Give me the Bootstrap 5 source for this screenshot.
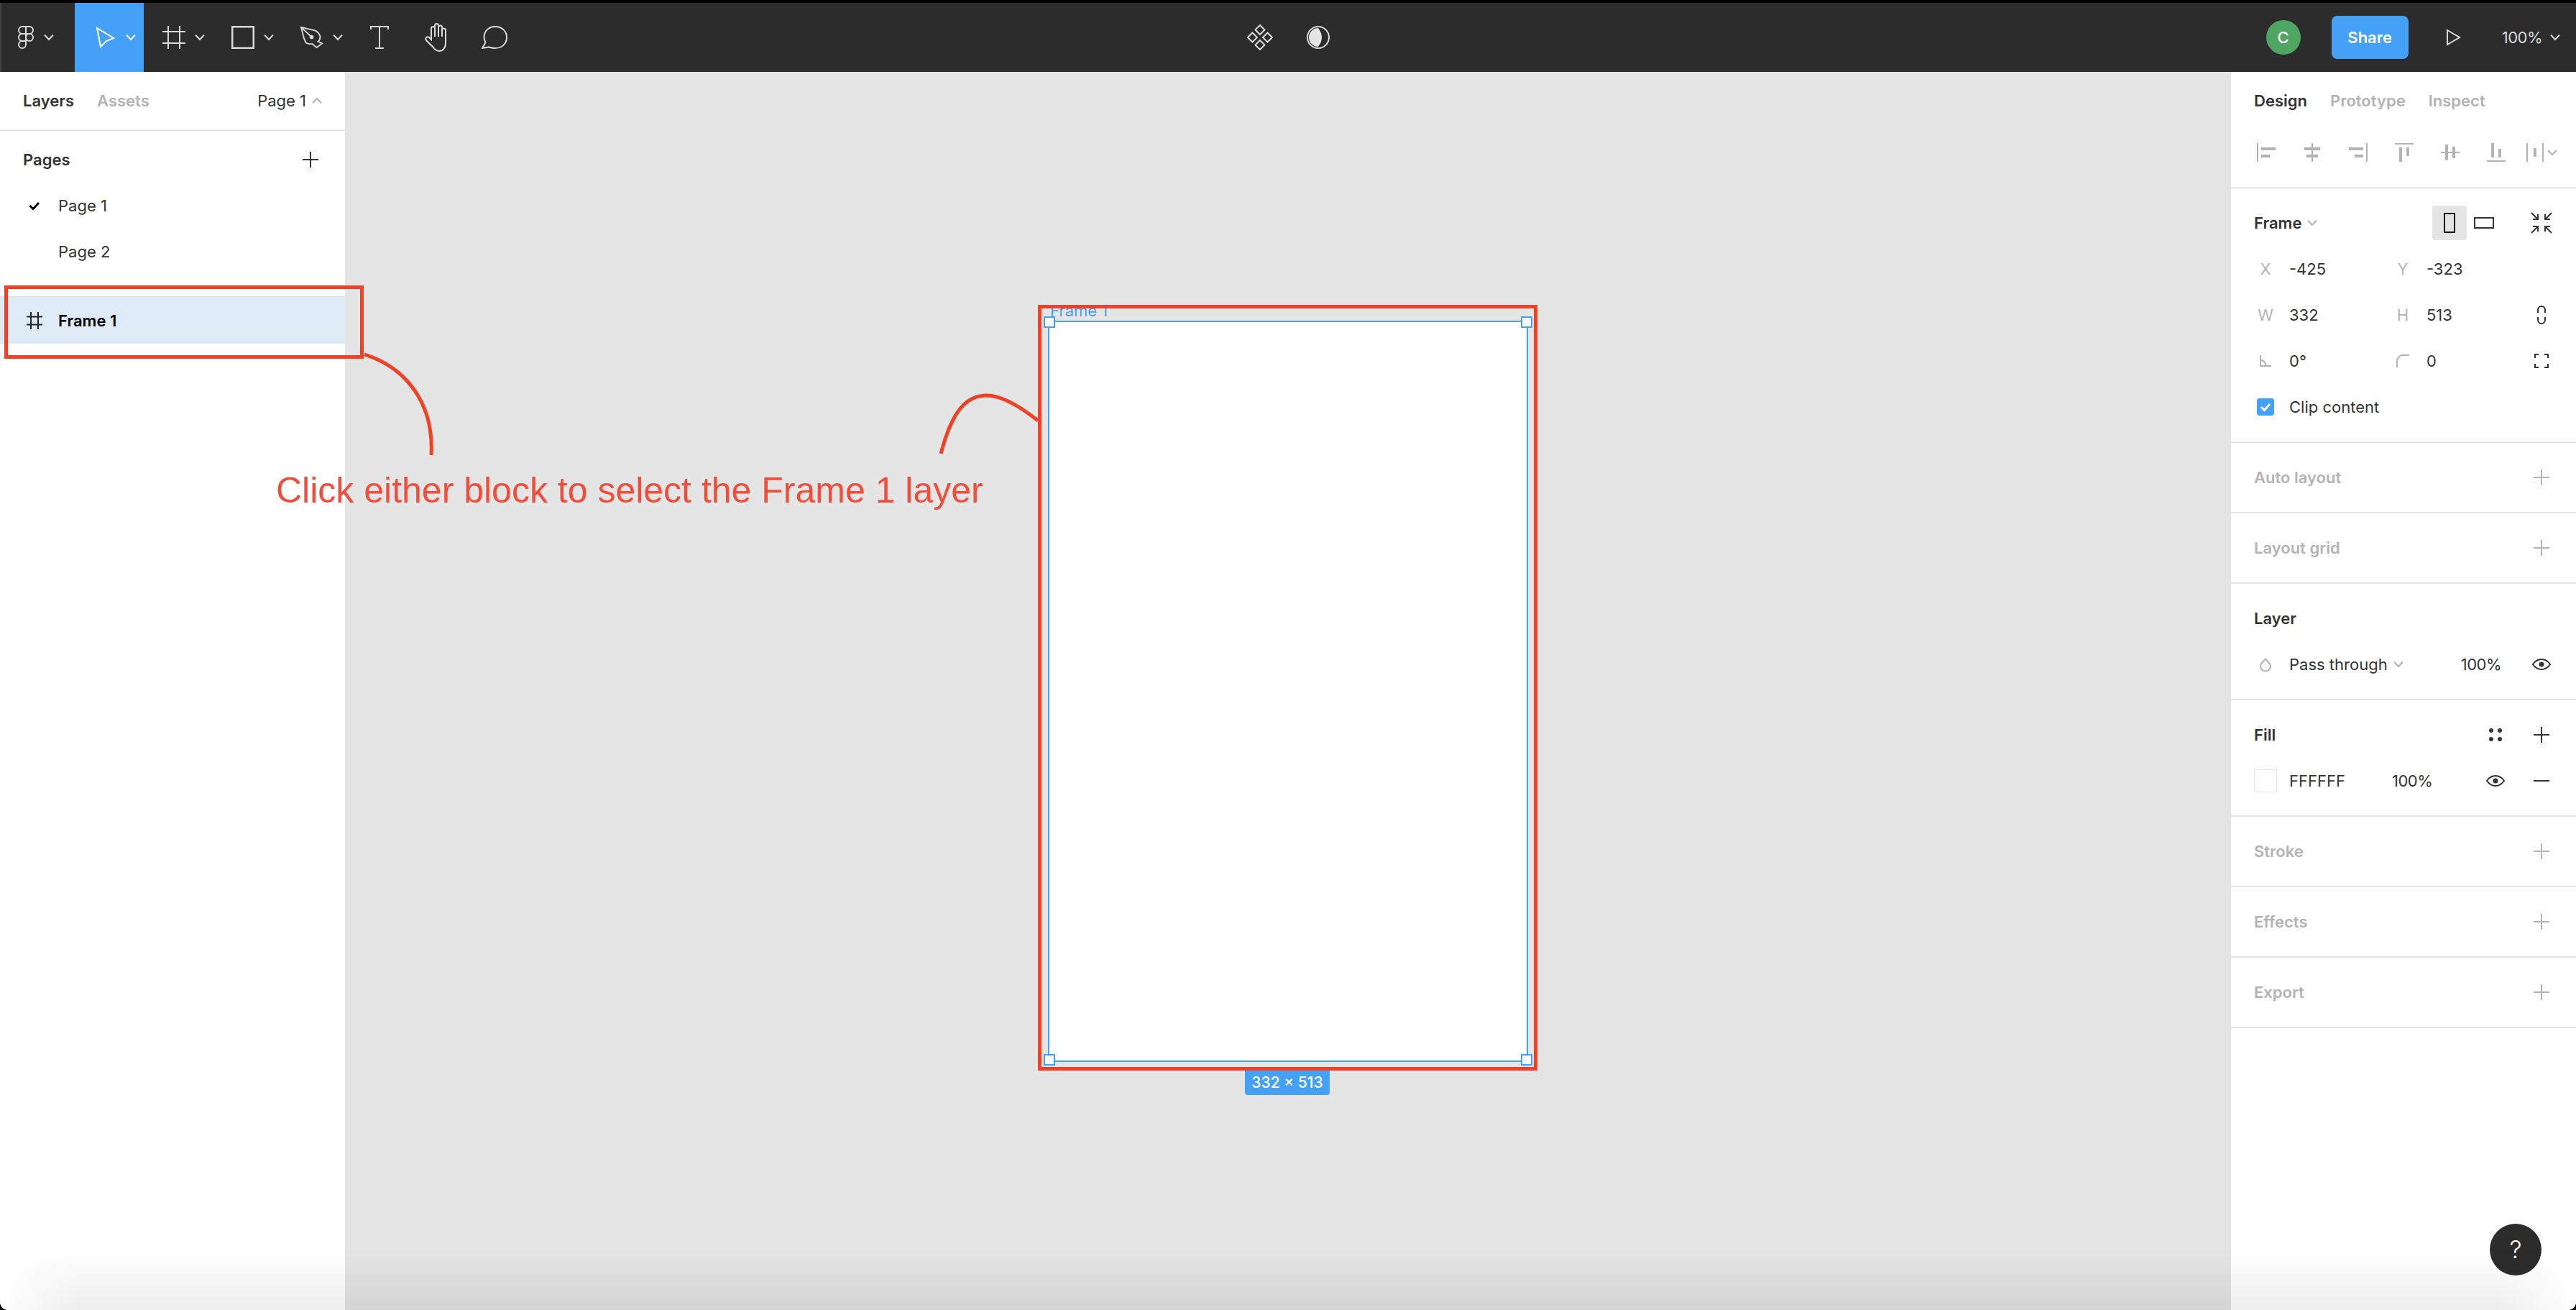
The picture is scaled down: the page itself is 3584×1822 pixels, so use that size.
<!DOCTYPE html>
<html lang="en">
<head>
    <meta charset="UTF-8">
    <title>Figma - Frame 1</title>
    <link href="https://cdn.jsdelivr.net/npm/bootstrap@5.3.2/dist/css/bootstrap.min.css" rel="stylesheet">
    <style>
        html, body { height: 100%; overflow: hidden; }
        body { font-family: "Inter", "Liberation Sans", sans-serif; font-size: 22px; line-height: 32px; color: #333; }
        svg { display: block; flex: none; }
        .fg-app { width: 3584px; height: 1822px; }

        .fg-toolbar { height: 100px; background: #2c2c2c; border-top: 4px solid #000; box-shadow: inset 2px 0 #444; color: #fff; display: grid; grid-template-columns: 1fr auto 1fr; }
        .fg-tool { height: 96px; width: 96px; padding-left: 26px; color: #d9d9d9; }
        .fg-tool.is-active { background: #45a1f5; color: #fff; }
        .fg-tool-logo { width: 104px; padding-left: 25px; }
        .fg-tool-logo .fg-chev { margin-left: 14px; }
        .fg-tool-icon { width: 32px; }
        .fg-tool > .fg-tool-icon + .fg-chev { margin-left: 13px; }
        .fg-tool-plain { height: 96px; width: 80px; color: #d9d9d9; }
        .fg-avatar { width: 48px; height: 48px; background: #4fa662; margin-right: 43px; font-weight: 500; }
        .fg-share { width: 107px; height: 60px; background: #45a1f5; color: #fff; border: 0; border-radius: 8px; font-size: 22px; font-weight: 600; padding: 0; margin-right: 52px; }
        .fg-zoom { color: #d9d9d9; margin-left: 57px; margin-right: 11px; }
        .fg-zoom-chev { color: #d9d9d9; margin-right: 22px; }
        .fg-pct { letter-spacing: -.5px; }

        .fg-main { height: 1722px; }
        .fg-left { width: 480px; background: #fff; }
        .fg-right { width: 484px; background: #fff; border-left: 4px solid #e5e5e5; }
        .fg-canvas { background: #e5e5e5; }

        .fg-tabs { height: 80px; padding: 0 32px; gap: 32px; }
        .fg-tabs-left { height: 82px; border-bottom: 2px solid #e5e5e5; }
        .fg-tab { font-weight: 600; color: #b3b3b3; }
        .fg-tab.is-on { color: #333; }
        .fg-page-pick { margin-right: -24px; }
        .fg-pages { padding: 8px 0 30px; border-bottom: 2px solid #e5e5e5; }
        .fg-row64 { height: 64px; }
        .fg-pages-head { padding: 0 37px 0 32px; }
        .fg-page-row { padding-left: 37px; }
        .fg-page-name { margin-left: 22px; }
        .fg-page-spacer { width: 22px; }
        .fg-layer-row { background: #deeaf5; color: #000; font-weight: 600; }

        .fg-section { padding: 16px 32px; border-bottom: 2px solid #e5e5e5; }
        .fg-title { font-weight: 600; }
        .fg-muted { color: #b3b3b3; }
        .fg-aligns { height: 64px; margin: 0 -32px 0 -15px; color: #b3b3b3; }
        .fg-aligns > div { width: 64px; }
        .fg-label { width: 32px; text-align: center; color: #b3b3b3; }
        .fg-value { margin-left: 17px; }
        .fg-v1 { width: 142px; }
        .fg-end { width: 32px; }
        .fg-end-gap { margin-left: 40px; }
        .fg-orient { width: 48px; height: 48px; border-radius: 4px; }
        .fg-orient.is-on { background: #e5e5e5; }
        .fg-check { width: 24px; height: 24px; background: #45a1f5; border-radius: 4px; margin-left: 4px; margin-right: 21px; }
        .fg-swatch { width: 32px; height: 32px; background: #fff; border: 1px solid #e5e5e5; }
        .fg-fill-value { width: 143px; }
        .fg-chev-muted { color: #b3b3b3; }
        .fg-dots { margin-right: 39px; }
        .fg-fill-eye { margin-right: 35px; }

        .fg-frame { position: absolute; left: 978px; top: 346px; width: 668px; height: 1031px; background: #fff; border: 2px solid #45a1f5; }
        .fg-frame-name { position: absolute; left: 981px; top: 316px; color: #45a1f5; }
        .fg-handle { position: absolute; width: 16px; height: 16px; background: #fafafa; border: 2px solid #45a1f5; }
        .fg-h-tl { left: 972px; top: 340px; }
        .fg-h-tr { left: 1636px; top: 340px; }
        .fg-h-bl { left: 972px; top: 1366px; }
        .fg-h-br { left: 1636px; top: 1366px; }
        .fg-size { position: absolute; left: 1252px; top: 1389px; width: 118px; height: 34px; background: #45a1f5; color: #fff; font-size: 21px; font-weight: 500; line-height: 34px; text-align: center; border-radius: 0 0 4px 4px; }

        .fg-notes { position: absolute; left: 0; top: 0; pointer-events: none; }
        .fg-note { position: absolute; left: 384px; top: 552px; font-family: "Liberation Sans", Arial, sans-serif; font-size: 50px; line-height: 60px; color: #f04e3a; white-space: nowrap; pointer-events: none; }
        .fg-help { position: absolute; left: 3464px; top: 1602px; width: 72px; height: 72px; background: #2c2c2c; color: #fff; font-size: 34px; font-weight: 300; }
        .fg-fade { position: absolute; left: 0; right: 0; bottom: 0; height: 84px; pointer-events: none; background: linear-gradient(to bottom, rgba(0,0,0,0), rgba(0,0,0,.07)); -webkit-mask-image: linear-gradient(to right, transparent, #000 110px, #000 calc(100% - 110px), transparent); }
        .fg-corner { position: absolute; bottom: 0; width: 10px; height: 10px; pointer-events: none; }
        .fg-corner-l { left: 0; background: radial-gradient(circle at 100% 0, transparent 9.5px, #000 10px); }
        .fg-corner-r { right: 0; background: radial-gradient(circle at 0 0, transparent 9.5px, #000 10px); }
    </style>
</head>
<body>
<svg width="0" height="0" class="position-absolute">
    <defs>
        <symbol id="i-plus" viewBox="0 0 22 22"><path d="M11 0v22M0 11h22" stroke="currentColor" stroke-width="2" fill="none"/></symbol>
        <symbol id="i-chev" viewBox="0 0 14 10"><path d="M1 1.500l6 6.500 6-6.500" stroke="currentColor" stroke-width="2" fill="none"/></symbol>
        <symbol id="i-eye" viewBox="0 0 26 16"><path d="M1 8c3-4.500 7-7 12-7s9 2.500 12 7c-3 4.500-7 7-12 7S4 12.500 1 8z" stroke="currentColor" stroke-width="2" fill="none"/><circle cx="13" cy="8" r="3.500" fill="currentColor"/></symbol>
    </defs>
</svg>

<div class="fg-app d-flex flex-column">
    <header class="fg-toolbar">
        <div class="d-flex">
            <div class="fg-tool fg-tool-logo d-flex align-items-center">
                <svg width="22" height="32" viewBox="0 0 22 32" fill="none" stroke="currentColor" stroke-width="2"><path d="M11 1H6a5 5 0 0 0 0 10h5zM11 1h5a5 5 0 0 1 0 10h-5zM11 11H6a5 5 0 0 0 0 10h5zM6 21h5v5a5 5 0 1 1-5-5z"/><circle cx="16" cy="16" r="5"/></svg>
                <svg class="fg-chev" width="14" height="10"><use href="#i-chev"/></svg>
            </div>
            <div class="fg-tool is-active d-flex align-items-center">
                <div class="fg-tool-icon d-flex justify-content-center"><svg width="27" height="30" viewBox="0 0 27 30" fill="none" stroke="#fff" stroke-width="2"><path d="M2 2l23 14-10 4-8 8z"/></svg></div>
                <svg class="fg-chev" width="14" height="10"><use href="#i-chev"/></svg>
            </div>
            <div class="fg-tool d-flex align-items-center">
                <div class="fg-tool-icon"><svg width="32" height="32" viewBox="0 0 32 32" fill="none" stroke="currentColor" stroke-width="2"><path d="M8 0v32M24 0v32M0 8h32M0 24h32"/></svg></div>
                <svg class="fg-chev" width="14" height="10"><use href="#i-chev"/></svg>
            </div>
            <div class="fg-tool d-flex align-items-center">
                <div class="fg-tool-icon"><svg width="32" height="32" viewBox="0 0 32 32" fill="none" stroke="currentColor" stroke-width="2.500"><rect x="1.250" y="1.250" width="29.500" height="29.500"/></svg></div>
                <svg class="fg-chev" width="14" height="10"><use href="#i-chev"/></svg>
            </div>
            <div class="fg-tool d-flex align-items-center">
                <div class="fg-tool-icon"><svg width="32" height="32" viewBox="0 0 34 32" fill="none" stroke="currentColor" stroke-width="2"><path d="M1 1l21 5c4 2 6 5 7 8 .5 3-.5 6-3 8l6 3-8 6-6.500-5.500c-3 .5-6 0-8.500-1-2-2-3-5-4-8zM1 1l15 14"/><circle cx="16.500" cy="15.500" r="3" fill="currentColor" stroke="none"/></svg></div>
                <svg class="fg-chev" width="14" height="10"><use href="#i-chev"/></svg>
            </div>
            <div class="fg-tool-plain d-flex align-items-center justify-content-center">
                <svg width="26" height="32" viewBox="0 0 26 32" fill="none" stroke="currentColor" stroke-width="2"><path d="M1 5V1h24v4M13 1v30M7 31h12"/></svg>
            </div>
            <div class="fg-tool-plain d-flex align-items-center justify-content-center">
                <svg width="34" height="40" viewBox="0 0 34 40" fill="none" stroke="currentColor" stroke-width="2"><path d="M9 23V7.500a2.500 2.500 0 0 1 5 0V3.500a2.500 2.500 0 0 1 5 0V6a2.500 2.500 0 0 1 5 0v4a2.500 2.500 0 0 1 5 0V28c0 7-4 11-9 11-4 0-6-2-8-5L2 24c-2-3 1-6 4-4zM14 7v12M19 4v15M24 6v13"/></svg>
            </div>
            <div class="fg-tool-plain d-flex align-items-center justify-content-center">
                <svg width="36" height="32" viewBox="0 0 36 32" fill="none" stroke="currentColor" stroke-width="2"><path d="M1 31l4.500-8C4 20 3.500 18 3.500 16 3.500 7 10 1 19 1s16 6 16 15-7 15-16 15c-3 0-6-.5-9-1.500z"/></svg>
            </div>
        </div>
        <div class="d-flex align-items-center" style="gap:47px">
            <svg width="36" height="36" viewBox="0 0 36 36" fill="none" stroke="#d9d9d9" stroke-width="2"><path d="M18 1l6.500 6.500L18 14l-6.500-6.500zM7.500 11.500L14 18l-6.500 6.500L1 18zM28.500 11.500L35 18l-6.500 6.500L22 18zM18 22l6.500 6.500L18 35l-6.500-6.500z"/></svg>
            <svg width="32" height="32" viewBox="0 0 32 32"><circle cx="16" cy="16" r="15" fill="none" stroke="#d9d9d9" stroke-width="2"/><path d="M16 3C9 3 3 9 3 16s6 13 13 13c3-4 5-8 5-13s-2-9-5-13z" fill="#e5e5e5"/></svg>
        </div>
        <div class="d-flex align-items-center justify-content-end">
            <div class="fg-avatar rounded-circle d-flex align-items-center justify-content-center text-white">C</div>
            <button class="btn fg-share" type="button">Share</button>
            <svg width="21" height="24" viewBox="0 0 21 24" fill="none" stroke="#d9d9d9" stroke-width="2"><path d="M2 2l17 10L2 22z"/></svg>
            <span class="fg-zoom fg-pct">100%</span>
            <svg class="fg-zoom-chev" width="14" height="10"><use href="#i-chev"/></svg>
        </div>
    </header>

    <main class="fg-main d-flex position-relative">
        <aside class="fg-left flex-none">
            <div class="fg-tabs fg-tabs-left d-flex align-items-center">
                <span class="fg-tab is-on">Layers</span>
                <span class="fg-tab">Assets</span>
                <span class="ms-auto fg-page-pick">Page 1</span>
                <svg class="fg-chev-muted" width="14" height="10" style="transform:rotate(180deg)"><use href="#i-chev"/></svg>
            </div>
            <div class="fg-pages">
                <div class="fg-row64 fg-pages-head d-flex align-items-center justify-content-between">
                    <span class="fg-tab is-on">Pages</span>
                    <svg width="22" height="22"><use href="#i-plus"/></svg>
                </div>
                <div class="fg-row64 fg-page-row d-flex align-items-center">
                    <svg width="22" height="18" viewBox="0 0 22 18" fill="none" stroke="#000" stroke-width="3"><path d="M4.500 9l4.500 4.500L17 5"/></svg>
                    <span class="fg-page-name">Page 1</span>
                </div>
                <div class="fg-row64 fg-page-row d-flex align-items-center">
                    <span class="fg-page-spacer"></span>
                    <span class="fg-page-name">Page 2</span>
                </div>
            </div>
            <div class="fg-row64 fg-layer-row fg-page-row d-flex align-items-center">
                <svg width="22" height="24" viewBox="0 0 22 24" fill="none" stroke="#222" stroke-width="2"><path d="M6 0v24M16 0v24M0 6.500h22M0 17.500h22"/></svg>
                <span class="fg-page-name">Frame 1</span>
            </div>
        </aside>

        <section class="fg-canvas flex-grow-1 position-relative">
            <div class="fg-frame-name">Frame 1</div>
            <div class="fg-frame"></div>
            <div class="fg-handle fg-h-tl"></div>
            <div class="fg-handle fg-h-tr"></div>
            <div class="fg-handle fg-h-bl"></div>
            <div class="fg-handle fg-h-br"></div>
            <div class="fg-size">332 × 513</div>
        </section>

        <aside class="fg-right flex-none">
            <div class="fg-tabs d-flex align-items-center">
                <span class="fg-tab is-on">Design</span>
                <span class="fg-tab">Prototype</span>
                <span class="fg-tab">Inspect</span>
            </div>
            <div class="fg-section pt-0">
                <div class="fg-aligns d-flex align-items-center">
                    <div class="d-flex justify-content-center"><svg width="26" height="26" viewBox="0 0 26 26" fill="currentColor"><rect x="0" width="2" height="26"/><rect x="6" y="6" width="20" height="4"/><rect x="6" y="16" width="12" height="4"/></svg></div>
                    <div class="d-flex justify-content-center"><svg width="26" height="26" viewBox="0 0 26 26" fill="currentColor"><rect x="12" width="2" height="26"/><rect x="2" y="6" width="22" height="4"/><rect x="5" y="16" width="16" height="4"/></svg></div>
                    <div class="d-flex justify-content-center"><svg width="26" height="26" viewBox="0 0 26 26" fill="currentColor"><rect x="24" width="2" height="26"/><rect x="0" y="6" width="20" height="4"/><rect x="8" y="16" width="12" height="4"/></svg></div>
                    <div class="d-flex justify-content-center"><svg width="26" height="26" viewBox="0 0 26 26" fill="currentColor"><rect y="0" width="26" height="2"/><rect x="6" y="6" width="4" height="20"/><rect x="16" y="6" width="4" height="12"/></svg></div>
                    <div class="d-flex justify-content-center"><svg width="26" height="26" viewBox="0 0 26 26" fill="currentColor"><rect y="12" width="26" height="2"/><rect x="6" y="2" width="4" height="22"/><rect x="16" y="5" width="4" height="16"/></svg></div>
                    <div class="d-flex justify-content-center"><svg width="26" height="26" viewBox="0 0 26 26" fill="currentColor"><rect y="24" width="26" height="2"/><rect x="6" y="0" width="4" height="20"/><rect x="16" y="8" width="4" height="12"/></svg></div>
                    <div class="d-flex justify-content-center"><svg width="44" height="26" viewBox="0 0 44 26" fill="currentColor"><rect x="0" width="2" height="26"/><rect x="22" width="2" height="26"/><rect x="10" y="7" width="4" height="12"/><path d="M30 10l6 6 6-6" stroke="currentColor" stroke-width="2" fill="none"/></svg></div>
                </div>
            </div>

            <div class="fg-section">
                <div class="fg-row64 d-flex align-items-center">
                    <span class="fg-title me-2">Frame</span>
                    <svg class="fg-chev-muted" width="14" height="10"><use href="#i-chev"/></svg>
                    <div class="fg-orient is-on d-flex align-items-center justify-content-center ms-auto"><svg width="16" height="28" viewBox="0 0 16 28" fill="none" stroke="#000" stroke-width="2"><rect x="1" y="1" width="14" height="26"/></svg></div>
                    <div class="fg-orient d-flex align-items-center justify-content-center"><svg width="28" height="16" viewBox="0 0 28 16" fill="none" stroke="#333" stroke-width="2"><rect x="1" y="1" width="26" height="14"/></svg></div>
                    <div class="fg-end fg-end-gap d-flex justify-content-center"><svg width="30" height="30" viewBox="0 0 30 30" fill="none" stroke="#333" stroke-width="2"><path d="M1 1l9 9M10 3v7H3M29 1l-9 9M20 3v7h7M1 29l9-9M10 27v-7H3M29 29l-9-9M20 27v-7h7"/></svg></div>
                </div>
                <div class="fg-row64 d-flex align-items-center">
                    <span class="fg-label">X</span><span class="fg-value fg-v1">-425</span>
                    <span class="fg-label">Y</span><span class="fg-value">-323</span>
                </div>
                <div class="fg-row64 d-flex align-items-center">
                    <span class="fg-label">W</span><span class="fg-value fg-v1">332</span>
                    <span class="fg-label">H</span><span class="fg-value">513</span>
                    <div class="fg-end d-flex justify-content-center ms-auto"><svg width="14" height="28" viewBox="0 0 14 28" fill="none" stroke="#333" stroke-width="2"><path d="M2 11V7a5 5 0 0 1 10 0v4M2 17v4a5 5 0 0 0 10 0v-4"/></svg></div>
                </div>
                <div class="fg-row64 d-flex align-items-center">
                    <span class="fg-label d-flex justify-content-center"><svg width="16" height="16" viewBox="0 0 16 16" fill="none" stroke="#b3b3b3" stroke-width="2"><path d="M1 0v15h15M1 7c4 0 7 3 8 8"/></svg></span><span class="fg-value fg-v1">0°</span>
                    <span class="fg-label d-flex justify-content-center"><svg width="18" height="18" viewBox="0 0 18 18" fill="none" stroke="#b3b3b3" stroke-width="2"><path d="M1 18V9a8 8 0 0 1 8-8h9"/></svg></span><span class="fg-value">0</span>
                    <div class="fg-end d-flex justify-content-center ms-auto"><svg width="20" height="20" viewBox="0 0 20 20" fill="none" stroke="#333" stroke-width="2"><path d="M1 6V1h5M14 1h5v5M19 14v5h-5M6 19H1v-5"/></svg></div>
                </div>
                <div class="fg-row64 d-flex align-items-center">
                    <span class="fg-check d-flex align-items-center justify-content-center"><svg width="16" height="14" viewBox="0 0 16 14" fill="none" stroke="#fff" stroke-width="3"><path d="M2 7l4.500 4.500L14 3"/></svg></span>
                    <span>Clip content</span>
                </div>
            </div>

            <div class="fg-section"><div class="fg-row64 d-flex align-items-center justify-content-between fg-muted"><span class="fg-title">Auto layout</span><div class="fg-end d-flex justify-content-center"><svg width="22" height="22"><use href="#i-plus"/></svg></div></div></div>
            <div class="fg-section"><div class="fg-row64 d-flex align-items-center justify-content-between fg-muted"><span class="fg-title">Layout grid</span><div class="fg-end d-flex justify-content-center"><svg width="22" height="22"><use href="#i-plus"/></svg></div></div></div>

            <div class="fg-section">
                <div class="fg-row64 d-flex align-items-center"><span class="fg-title">Layer</span></div>
                <div class="fg-row64 d-flex align-items-center">
                    <span class="fg-label d-flex justify-content-center"><svg width="16" height="19" viewBox="0 0 16 19" fill="none" stroke="#b3b3b3" stroke-width="2"><path d="M8 1.500C5 5 1 8 1 11.500a7 7 0 0 0 14 0C15 8 11 5 8 1.500z"/></svg></span>
                    <span class="fg-value me-2">Pass through</span>
                    <svg class="fg-chev-muted" width="14" height="10"><use href="#i-chev"/></svg>
                    <span class="ms-auto fg-pct">100%</span>
                    <div class="fg-end fg-end-gap d-flex justify-content-center"><svg width="26" height="16"><use href="#i-eye"/></svg></div>
                </div>
            </div>

            <div class="fg-section">
                <div class="fg-row64 d-flex align-items-center">
                    <span class="fg-title">Fill</span>
                    <svg class="ms-auto fg-dots" width="18" height="18" viewBox="0 0 18 18" fill="#333"><circle cx="3" cy="3" r="3"/><circle cx="15" cy="3" r="3"/><circle cx="3" cy="15" r="3"/><circle cx="15" cy="15" r="3"/></svg>
                    <div class="fg-end d-flex justify-content-center"><svg width="22" height="22"><use href="#i-plus"/></svg></div>
                </div>
                <div class="fg-row64 d-flex align-items-center">
                    <span class="fg-swatch"></span>
                    <span class="fg-value fg-fill-value">FFFFFF</span>
                    <span class="fg-pct">100%</span>
                    <svg class="ms-auto fg-fill-eye" width="26" height="16"><use href="#i-eye"/></svg>
                    <div class="fg-end d-flex justify-content-center"><svg width="22" height="2" viewBox="0 0 22 2"><rect width="22" height="2" fill="#333"/></svg></div>
                </div>
            </div>

            <div class="fg-section"><div class="fg-row64 d-flex align-items-center justify-content-between fg-muted"><span class="fg-title">Stroke</span><div class="fg-end d-flex justify-content-center"><svg width="22" height="22"><use href="#i-plus"/></svg></div></div></div>
            <div class="fg-section"><div class="fg-row64 d-flex align-items-center justify-content-between fg-muted"><span class="fg-title">Effects</span><div class="fg-end d-flex justify-content-center"><svg width="22" height="22"><use href="#i-plus"/></svg></div></div></div>
            <div class="fg-section"><div class="fg-row64 d-flex align-items-center justify-content-between fg-muted"><span class="fg-title">Export</span><div class="fg-end d-flex justify-content-center"><svg width="22" height="22"><use href="#i-plus"/></svg></div></div></div>
        </aside>

        <!-- red annotations, coordinates are window pixels -->
        <svg class="fg-notes" width="3584" height="1722" viewBox="0 100 3584 1722" fill="none" stroke="#ef4125" stroke-width="5">
            <rect x="8.500" y="399.500" width="495" height="97"/>
            <rect x="1446.500" y="426.500" width="690" height="1060"/>
            <path d="M507 493C562 510 604 558 600 633"/>
            <path d="M1309 631C1325 570 1345 550 1373 550C1395 550 1420 566 1444 585"/>
        </svg>
        <div class="fg-note">Click either block to select the Frame 1 layer</div>
        <div class="fg-help rounded-circle d-flex align-items-center justify-content-center">?</div>
        <div class="fg-fade"></div>
        <div class="fg-corner fg-corner-l"></div>
        <div class="fg-corner fg-corner-r"></div>
    </main>
</div>
<script src="https://cdn.jsdelivr.net/npm/bootstrap@5.3.2/dist/js/bootstrap.bundle.min.js"></script>
</body>
</html>
